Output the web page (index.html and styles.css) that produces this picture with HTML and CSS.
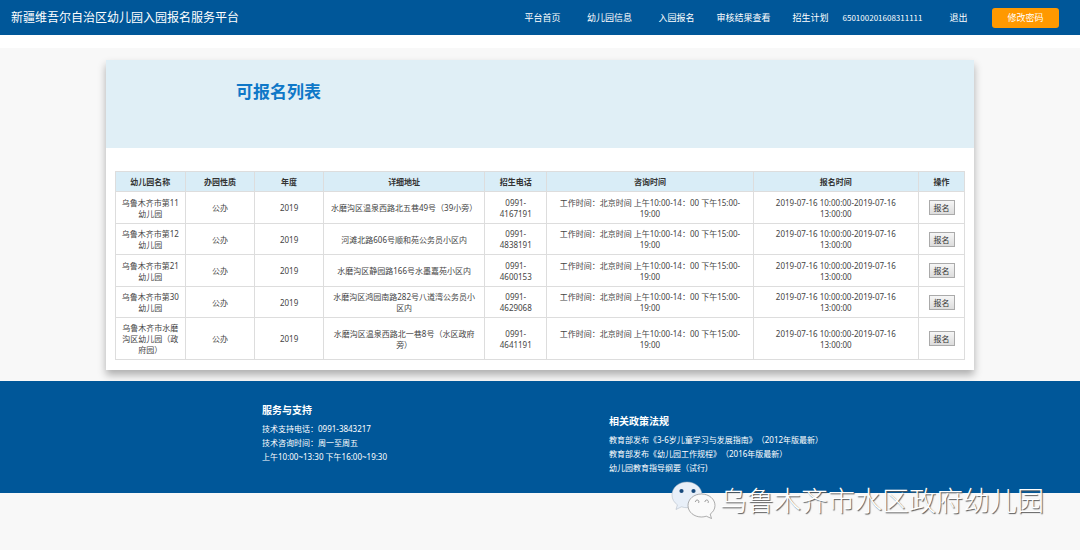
FILE: index.html
```html
<!DOCTYPE html>
<html lang="zh-CN">
<head>
<meta charset="utf-8">
<meta name="viewport" content="width=device-width, initial-scale=1">
<title>新疆维吾尔自治区幼儿园入园报名服务平台</title>
<link rel="stylesheet" href="styles.css">
</head>
<body>
<header class="topbar">
  <div class="brand">新疆维吾尔自治区幼儿园入园报名服务平台</div>
  <nav class="nav">
    <a href="#">平台首页</a>
    <a href="#">幼儿园信息</a>
    <a href="#">入园报名</a>
    <a href="#">审核结果查看</a>
    <a href="#">招生计划</a>
    <a href="#" class="account">650100201608311111</a>
    <a href="#">退出</a>
    <button type="button" class="password">修改密码</button>
  </nav>
</header>
<main class="page">
  <section class="card">
    <div class="card-head"><h1>可报名列表</h1></div>
    <div class="card-body">
      <table class="list">
        <colgroup>
          <col class="c-name"><col class="c-type"><col class="c-year"><col class="c-addr"><col class="c-tel"><col class="c-ask"><col class="c-time"><col class="c-act">
        </colgroup>
        <thead>
          <tr><th>幼儿园名称</th><th>办园性质</th><th>年度</th><th>详细地址</th><th>招生电话</th><th>咨询时间</th><th>报名时间</th><th>操作</th></tr>
        </thead>
        <tbody>
          <tr><td>乌鲁木齐市第11幼儿园</td><td>公办</td><td>2019</td><td>水磨沟区温泉西路北五巷49号（39小旁）</td><td>0991-<br>4167191</td><td>工作时间：北京时间 上午10:00-14：00 下午15:00-<br>19:00</td><td>2019-07-16 10:00:00-2019-07-16<br>13:00:00</td><td><button type="button" class="apply">报名</button></td></tr>
          <tr><td>乌鲁木齐市第12幼儿园</td><td>公办</td><td>2019</td><td>河滩北路606号顺和苑公务员小区内</td><td>0991-<br>4838191</td><td>工作时间：北京时间 上午10:00-14：00 下午15:00-<br>19:00</td><td>2019-07-16 10:00:00-2019-07-16<br>13:00:00</td><td><button type="button" class="apply">报名</button></td></tr>
          <tr><td>乌鲁木齐市第21幼儿园</td><td>公办</td><td>2019</td><td>水磨沟区静园路166号水墨嘉苑小区内</td><td>0991-<br>4600153</td><td>工作时间：北京时间 上午10:00-14：00 下午15:00-<br>19:00</td><td>2019-07-16 10:00:00-2019-07-16<br>13:00:00</td><td><button type="button" class="apply">报名</button></td></tr>
          <tr><td>乌鲁木齐市第30幼儿园</td><td>公办</td><td>2019</td><td>水磨沟区鸿园南路282号八道湾公务员小<br>区内</td><td>0991-<br>4629068</td><td>工作时间：北京时间 上午10:00-14：00 下午15:00-<br>19:00</td><td>2019-07-16 10:00:00-2019-07-16<br>13:00:00</td><td><button type="button" class="apply">报名</button></td></tr>
          <tr><td>乌鲁木齐市水磨<br>沟区幼儿园（政<br>府园）</td><td>公办</td><td>2019</td><td>水磨沟区温泉西路北一巷8号（水区政府<br>旁）</td><td>0991-<br>4641191</td><td>工作时间：北京时间 上午10:00-14：00 下午15:00-<br>19:00</td><td>2019-07-16 10:00:00-2019-07-16<br>13:00:00</td><td><button type="button" class="apply">报名</button></td></tr>
        </tbody>
      </table>
    </div>
  </section>
</main>
<footer class="footer">
  <section class="support">
    <h2>服务与支持</h2>
    <p>技术支持电话：0991-3843217</p>
    <p>技术咨询时间：周一至周五</p>
    <p>上午10:00~13:30 下午16:00~19:30</p>
  </section>
  <section class="policy">
    <h2>相关政策法规</h2>
    <a href="#">教育部发布《3-6岁儿童学习与发展指南》（2012年版最新）</a>
    <a href="#">教育部发布《幼儿园工作规程》（2016年版最新）</a>
    <a href="#">幼儿园教育指导纲要（试行)</a>
  </section>
</footer>
<div class="watermark">
  <svg width="46" height="40" viewBox="0 0 46 40" aria-hidden="true">
    <path fill="#e8eff8" stroke="#aab4c0" stroke-width=".5" d="M17 1C8.500 1 2 6.700 2 14c0 4 2 7.500 5.400 9.800L6 28.500l5.500-2.700c1.800.6 3.600.9 5.500.9 8.400 0 15-5.700 15-12.800S25.400 1 17 1z"/>
    <circle cx="11.500" cy="10" r="2.100" fill="#17497b"/><circle cx="23.500" cy="10" r="2.100" fill="#17497b"/>
    <path fill="#fafafa" stroke="#8c8c8c" stroke-width=".7" d="M31.500 13C24 13 18 18 18 24.500S24 36 31.500 36c1.700 0 3.300-.3 4.800-.8L41.500 37.500l-1.300-4.400c2.900-2.100 4.800-5.100 4.800-8.600C45 18 39 13 31.500 13z"/>
    <path fill="none" stroke="#8c8c8c" stroke-width=".9" d="M25.500 21a1.700 1.700 0 1 1 2.800 1M35 21a1.700 1.700 0 1 1 2.800 1"/>
  </svg>
  <span>乌鲁木齐市水区政府幼儿园</span>
</div>
</body>
</html>
```

FILE: styles.css
```css
* { box-sizing: border-box; }
body {
  position: relative;
  margin: 0;
  min-height: 100vh;
  background: #f8f8f8;
  color: #444;
  font: 8px/11px "Noto Sans", "Noto Sans CJK SC", sans-serif;
  text-spacing-trim: space-all;
}
a { color: inherit; text-decoration: none; }
h1, h2, p { margin: 0; }

.topbar {
  display: flex;
  align-items: center;
  justify-content: space-between;
  height: 35px;
  padding: 0 21px 0 11px;
  background: #005799;
  color: #fff;
}
.brand { font-size: 12px; line-height: 18px; white-space: nowrap; }
.nav { display: flex; align-items: center; font-size: 9px; line-height: 14px; }
.nav a {
  display: flex;
  justify-content: center;
  width: 67px;
  white-space: nowrap;
}
.nav .account {
  width: 77px;
  margin-right: 4px;
  font-family: "Noto Sans CJK SC", sans-serif;
  font-size: 8px;
}
.password {
  width: 67px;
  height: 20px;
  padding: 0;
  border: 0;
  border-radius: 3px;
  background: #ff9900;
  color: #fff;
  font: inherit;
}

.page { padding: 12px 106px 11px; border-top: 13px solid #fff; }
.card { background: #fff; box-shadow: 0 5px 8px rgba(0, 0, 0, .3); }
.card-head { height: 88px; padding: 20px 130px; background: #e0eff6; }
.card-head h1 { color: #0f78c8; font-size: 17px; line-height: 24px; }
.card-body { padding: 23px 9px 10px; }

.list {
  width: 100%;
  border-collapse: collapse;
  table-layout: fixed;
  text-align: center;
}
.list tbody tr:nth-child(odd) { height: 32px; }
.list th, .list td { padding: 4px; border: 1px solid #ddd; vertical-align: middle; }
.list th { background: #d9edf7; color: #333; }
.list td:last-child { padding: 0; }
.c-name, .c-type { width: 8.2%; }
.c-year { width: 8.1%; }
.c-addr { width: 19%; }
.c-tel { width: 7.3%; }
.c-ask { width: 24.3%; }
.c-time { width: 19.5%; }
.c-act { width: 5.4%; }
.apply {
  display: block;
  width: 26px;
  height: 15px;
  margin: 0 auto;
  padding: 0;
  border: 1px solid #aaa;
  background: linear-gradient(#f6f6f6, #dcdcdc);
  color: #333;
  font: inherit;
}

.footer {
  display: flex;
  min-height: 112px;
  padding: 21px 0 0 262px;
  background: #005799;
  color: #fff;
  line-height: 14px;
}
.footer h2 { margin-bottom: 4px; font-size: 10px; line-height: 16px; }
.support { flex: 0 0 347px; }
.policy { padding-top: 11px; }
.policy a { display: block; }

.watermark {
  position: absolute;
  top: 481px;
  right: 36px;
  display: flex;
  align-items: center;
  gap: 4px;
  color: #fff;
  font-size: 27px;
  font-weight: 300;
  line-height: 40px;
  white-space: nowrap;
  text-shadow: 1px 1px 1px #555;
}
```
